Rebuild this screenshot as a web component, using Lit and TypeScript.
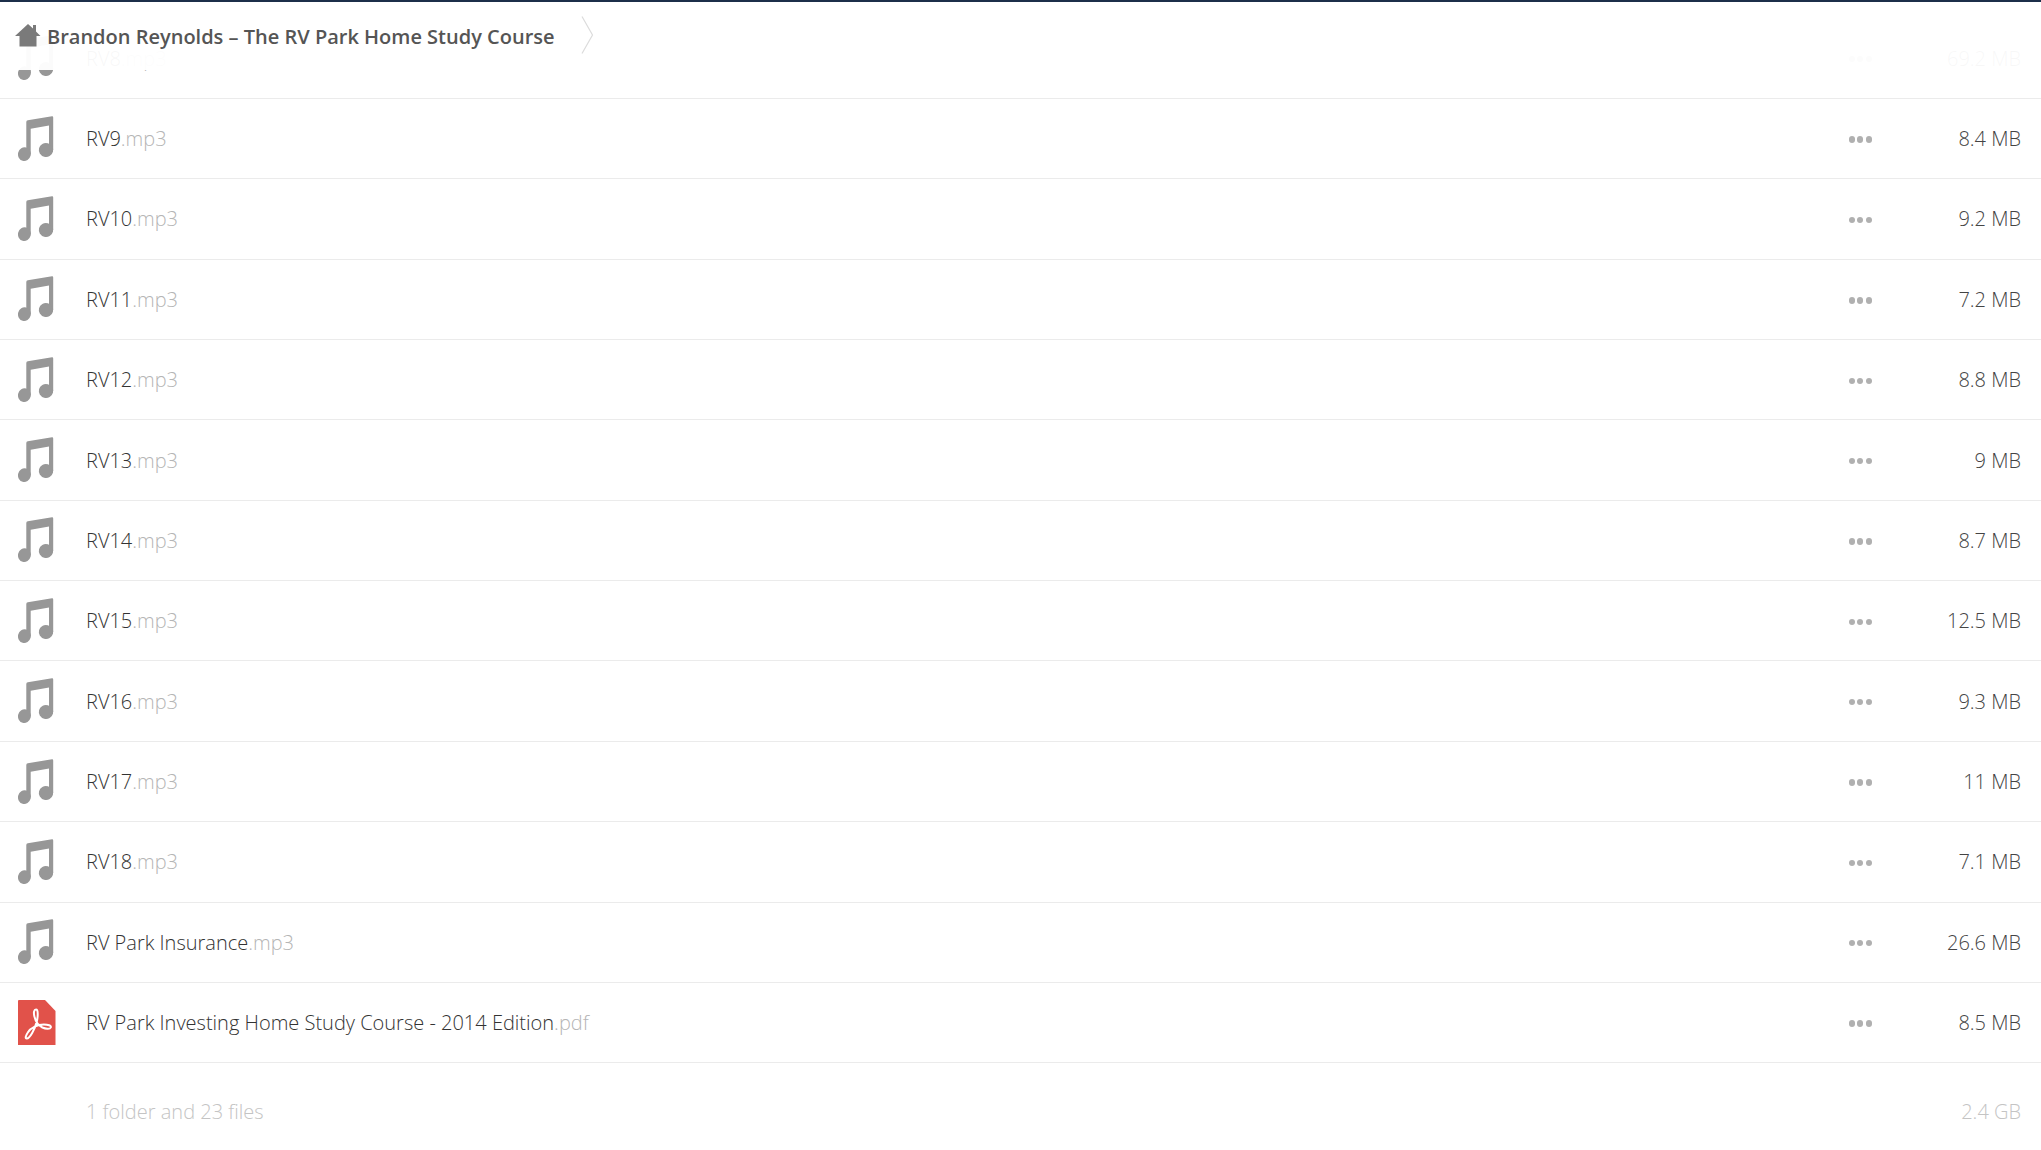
import { LitElement, html, css, svg } from 'lit';
import { customElement } from 'lit/decorators.js';

type FileRow = { name: string; ext: string; size: string };

const FILES: FileRow[] = [
  { name: 'RV8', ext: '.mp3', size: '69.2 MB' },
  { name: 'RV9', ext: '.mp3', size: '8.4 MB' },
  { name: 'RV10', ext: '.mp3', size: '9.2 MB' },
  { name: 'RV11', ext: '.mp3', size: '7.2 MB' },
  { name: 'RV12', ext: '.mp3', size: '8.8 MB' },
  { name: 'RV13', ext: '.mp3', size: '9 MB' },
  { name: 'RV14', ext: '.mp3', size: '8.7 MB' },
  { name: 'RV15', ext: '.mp3', size: '12.5 MB' },
  { name: 'RV16', ext: '.mp3', size: '9.3 MB' },
  { name: 'RV17', ext: '.mp3', size: '11 MB' },
  { name: 'RV18', ext: '.mp3', size: '7.1 MB' },
  { name: 'RV Park Insurance', ext: '.mp3', size: '26.6 MB' },
  { name: 'RV Park Investing Home Study Course - 2014 Edition', ext: '.pdf', size: '8.5 MB' },
];

const noteIcon = html`<svg class="icon" width="38" height="46" viewBox="0 0 38 46">
  <path fill="#979797" d="M8.3 6 Q8.3 4.6 9.8 4.3 L34 .3 Q35.2 .2 35.2 1.4 V34 H31 V9.5 L12.7 12.8 V38 H8.3 Z" />
  <ellipse fill="#979797" cx="6.4" cy="38.2" rx="6.4" ry="6.9" transform="rotate(15 6.4 38.2)" />
  <ellipse fill="#979797" cx="28" cy="34" rx="7.2" ry="6.9" transform="rotate(15 28 34)" />
</svg>`;

const pdfIcon = html`<svg class="icon" width="38" height="46" viewBox="0 0 38 46">
  ${svg`<path fill="#e1524a" d="M1 0 H27 L37.5 11 V45 H0 V1 Q0 0 1 0 Z" />
  <path fill="none" stroke="#fff" stroke-width="2" stroke-linejoin="round" d="M18 9.5 c-2 0 -2.6 3 -1.6 7 c1.2 5 4 9 8 11 c3 1.3 7.6 2 8.4 0 c.8 -2 -3 -3 -7 -3 c-6 0 -13 3 -16 8 c-2 3 -3 6 -1 6 c3 0 8 -9 10 -17 c1 -4 1.7 -12 -.8 -12 z" />`}
</svg>`;

const homeIcon = html`<svg width="26" height="23" viewBox="0 0 26 23">
  <path fill="#7a7a7a" d="M13 0 L18 4.6 V1 H21 V7.4 L25.5 12 H21.5 V22.5 H4.5 V12 H0 Z" />
</svg>`;

@customElement('app-root')
export class AppRoot extends LitElement {
  static styles = css`
    :host {
      display: block;
      height: 1150px;
      overflow: hidden;
      position: relative;
      background: #fff;
      font-family: 'Open Sans', 'Liberation Sans', sans-serif;
    }
    .header {
      position: absolute;
      top: 0;
      left: 0;
      right: 0;
      height: 68px;
      border-top: 2px solid #1c2f4a;
      background: rgba(255, 255, 255, 0.96);
      display: flex;
      align-items: center;
      padding-left: 15px;
      box-sizing: content-box;
    }
    .header .home {
      display: flex;
      margin-top: -1px;
      margin-right: 6px;
    }
    .title {
      font-size: 20px;
      font-weight: 600;
      color: #555;
      white-space: nowrap;
    }
    .chevron {
      margin-left: 26px;
      margin-top: -2px;
      display: flex;
    }
    .list {
      padding-top: 18.6px;
    }
    .row {
      height: 80.37px;
      box-sizing: border-box;
      border-bottom: 1px solid #ebebeb;
      display: flex;
      align-items: center;
    }
    .icon-cell {
      width: 86px;
      padding-left: 18px;
      box-sizing: border-box;
      display: flex;
      flex: none;
    }
    .name {
      flex: 1;
      font-size: 20px;
      font-weight: 300;
      color: #333;
      white-space: nowrap;
    }
    .ext {
      color: #b5b5b5;
    }
    .dots {
      flex: none;
      display: flex;
      gap: 2.3px;
      margin-top: 2px;
    }
    .dots i {
      width: 6.3px;
      height: 6.3px;
      border-radius: 50%;
      background: #b0b0b0;
    }
    .size {
      flex: none;
      width: 169px;
      padding-right: 20px;
      box-sizing: border-box;
      text-align: right;
      font-size: 20px;
      font-weight: 300;
      color: #444;
      white-space: nowrap;
    }
    .summary {
      height: 96px;
      display: flex;
      align-items: center;
      padding-left: 86px;
      padding-right: 20px;
      justify-content: space-between;
      font-size: 20px;
      font-weight: 300;
      color: #c4c4c4;
    }
  `;

  render() {
    return html`
      <div class="list">
        ${FILES.map(
          (f) => html`<div class="row">
            <div class="icon-cell">${f.ext === '.pdf' ? pdfIcon : noteIcon}</div>
            <div class="name">${f.name}<span class="ext">${f.ext}</span></div>
            <div class="dots"><i></i><i></i><i></i></div>
            <div class="size">${f.size}</div>
          </div>`
        )}
        <div class="summary"><span>1 folder and 23 files</span><span>2.4 GB</span></div>
      </div>
      <div class="header">
        <span class="home">${homeIcon}</span>
        <span class="title">Brandon Reynolds – The RV Park Home Study Course</span>
        <span class="chevron">
          <svg width="13" height="38" viewBox="0 0 13 38">
            <path fill="none" stroke="#dcdcdc" stroke-width="1.2" d="M1 .5 L11.5 19 L1 37.5" />
          </svg>
        </span>
      </div>
    `;
  }
}
